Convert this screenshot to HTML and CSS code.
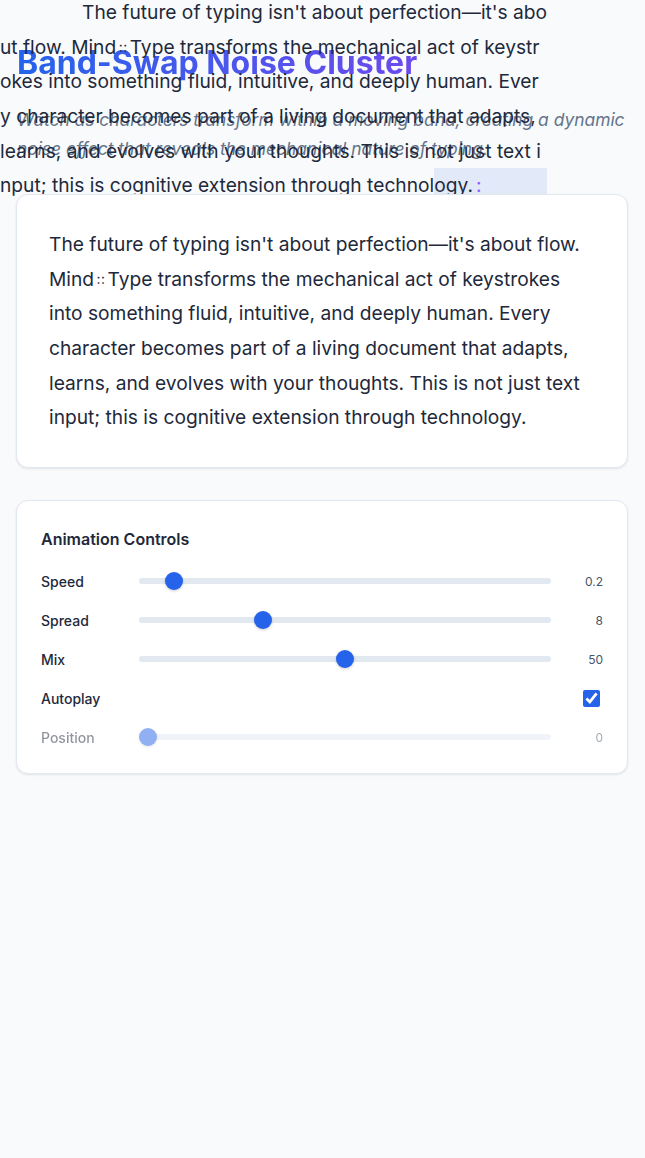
FILE: index.html
```html
<!DOCTYPE html>
<html lang="en">
<head>
<meta charset="utf-8">
<title>Band-Swap Noise Cluster</title>
<link rel="stylesheet" href="styles.css">
</head>
<body>
<div class="page">
  <div class="band"></div>
  <div class="ghost">The future of typing isn't about perfection—it's abo<br>ut flow. Mind<span class="sep">::</span>Type transforms the mechanical act of keystr<br>okes into something fluid, intuitive, and deeply human. Ever<br>y character becomes part of a living document that adapts,<br>learns, and evolves with your thoughts. This is not just text i<br>nput; this is cognitive extension through technology.<span class="caret">:</span></div>

  <header class="header">
    <h1 class="title">Band-Swap Noise Cluster</h1>
    <p class="subtitle">Watch as characters transform within a moving band, creating a dynamic noise effect that reveals the mechanical nature of typing.</p>
  </header>

  <section class="card text-card">
    <p class="demo-text">The future of typing isn't about perfection—it's about flow. Mind<span class="sep">::</span>Type transforms the mechanical act of keystrokes into something fluid, intuitive, and deeply human. Every character becomes part of a living document that adapts, learns, and evolves with your thoughts. This is not just text input; this is cognitive extension through technology.</p>
  </section>

  <section class="card controls">
    <h2 class="controls-title">Animation Controls</h2>
    <div class="control-row">
      <label class="control-label">Speed</label>
      <input class="slider" type="range" min="0" max="3" step="0.1" value="0.2">
      <span class="control-value">0.2</span>
    </div>
    <div class="control-row">
      <label class="control-label">Spread</label>
      <input class="slider" type="range" min="1" max="25" step="1" value="8">
      <span class="control-value">8</span>
    </div>
    <div class="control-row">
      <label class="control-label">Mix</label>
      <input class="slider" type="range" min="0" max="100" step="1" value="50">
      <span class="control-value">50</span>
    </div>
    <div class="control-row">
      <label class="control-label">Autoplay</label>
      <span class="spacer"></span>
      <span class="control-value"><input class="check" type="checkbox" checked></span>
    </div>
    <div class="control-row disabled">
      <label class="control-label">Position</label>
      <input class="slider" type="range" min="0" max="100" step="1" value="0" disabled>
      <span class="control-value">0</span>
    </div>
  </section>
</div>
</body>
</html>
```

FILE: styles.css
```css
* { box-sizing: border-box; }

html, body {
  margin: 0;
  padding: 0;
  background: #f8fafc;
}

body {
  font-family: Inter, "Noto Sans", "Liberation Sans", sans-serif;
  color: #1e293b;
}

.page {
  position: relative;
  padding: 44px 17px 40px 16px;
  min-height: 1158px;
}

.ghost {
  position: absolute;
  top: -5px;
  left: 0;
  width: 546px;
  font-size: 19.2px;
  line-height: 34.56px;
  text-indent: 82px;
  white-space: nowrap;
  color: #1e293b;
  z-index: 2;
  pointer-events: none;
}

.sep {
  font-size: 0.72em;
  letter-spacing: 0.5px;
  margin: 0 2px 0 2.5px;
  vertical-align: 0.12em;
}

.caret {
  color: #8b5cf6;
  margin-left: 3px;
}

.band {
  position: absolute;
  left: 434px;
  top: 168px;
  width: 113px;
  height: 36px;
  background: rgba(37, 99, 235, 0.1);
  z-index: 1;
}

.header {
  position: relative;
  z-index: 1;
  padding-left: 1px;
}

.title {
  margin: 0;
  font-size: 32px;
  line-height: 38px;
  font-weight: 700;
  letter-spacing: 0;
  background: linear-gradient(90deg, #2563eb 0%, #6d4aed 100%);
  -webkit-background-clip: text;
  background-clip: text;
  color: transparent;
  display: inline-block;
}

.subtitle {
  margin: 23px 0 0 0;
  font-size: 17.4px;
  line-height: 29px;
  font-style: italic;
  color: #64748b;
}

.card {
  position: relative;
  z-index: 3;
  background: #ffffff;
  border: 1px solid #e2e8f0;
  border-radius: 12px;
  box-shadow: 0 1px 3px rgba(15, 23, 42, 0.06), 0 1px 2px rgba(15, 23, 42, 0.04);
}

.text-card {
  margin-top: 31px;
  padding: 32px;
}

.demo-text {
  margin: 0;
  font-size: 19.2px;
  line-height: 34.56px;
  color: #1e293b;
}

.controls {
  margin-top: 32px;
  padding: 24px 24px 16px 24px;
}

.controls-title {
  margin: 0 0 9px 0;
  font-size: 16px;
  line-height: 28px;
  font-weight: 600;
  color: #1e293b;
}

.control-row {
  display: grid;
  grid-template-columns: 86px 1fr 40px;
  column-gap: 12px;
  align-items: center;
  height: 39px;
}

.control-label {
  font-size: 14px;
  font-weight: 500;
  color: #1e293b;
}

.control-value {
  font-size: 12px;
  color: #475569;
  text-align: right;
  display: flex;
  justify-content: flex-end;
  align-items: center;
}

.disabled {
  opacity: 0.5;
}

.slider {
  -webkit-appearance: none;
  appearance: none;
  width: 100%;
  height: 6px;
  margin: 0;
  border-radius: 3px;
  background: #e2e8f0;
  outline: none;
}

.slider::-webkit-slider-thumb {
  -webkit-appearance: none;
  appearance: none;
  width: 18px;
  height: 18px;
  border-radius: 50%;
  background: #2563eb;
  border: none;
  box-shadow: 0 1px 3px rgba(0, 0, 0, 0.2);
}

.check {
  width: 17px;
  height: 17px;
  margin: 0 3px 0 0;
  accent-color: #2563eb;
}
```
